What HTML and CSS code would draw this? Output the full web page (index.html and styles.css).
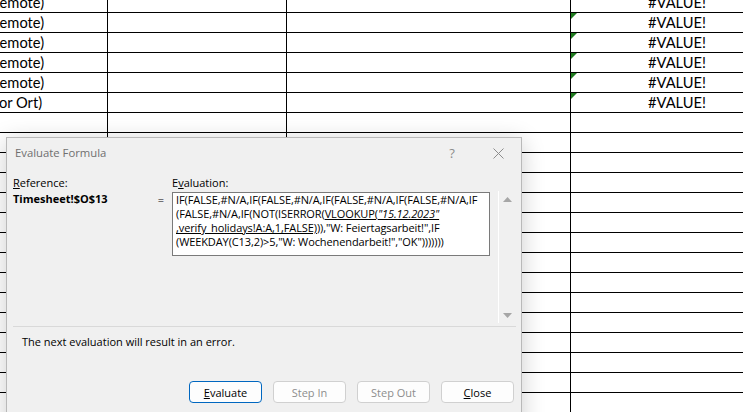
FILE: index.html
```html
<!DOCTYPE html>
<html lang="en">
<head>
<meta charset="utf-8">
<title>Evaluate Formula</title>
<link rel="stylesheet" href="styles.css">
</head>
<body>
<div class="sheet">
  <div class="row"><div class="c a"><span class="ov ov-r">(Remote)</span></div><div class="c b"></div><div class="c m"></div><div class="c d">#VALUE!</div></div>
  <div class="row"><div class="c a"><span class="ov ov-r">(Remote)</span></div><div class="c b"></div><div class="c m"></div><div class="c d flag">#VALUE!</div></div>
  <div class="row"><div class="c a"><span class="ov ov-r">(Remote)</span></div><div class="c b"></div><div class="c m"></div><div class="c d flag">#VALUE!</div></div>
  <div class="row"><div class="c a"><span class="ov ov-r">(Remote)</span></div><div class="c b"></div><div class="c m"></div><div class="c d flag">#VALUE!</div></div>
  <div class="row"><div class="c a"><span class="ov ov-r">(Remote)</span></div><div class="c b"></div><div class="c m"></div><div class="c d flag">#VALUE!</div></div>
  <div class="row"><div class="c a"><span class="ov ov-v">(vor Ort)</span></div><div class="c b"></div><div class="c m"></div><div class="c d flag">#VALUE!</div></div>
  <div class="row"><div class="c a"></div><div class="c b"></div><div class="c m"></div><div class="c d"></div></div>
  <div class="row"><div class="c a"></div><div class="c b"></div><div class="c m"></div><div class="c d"></div></div>
  <div class="row"><div class="c a"></div><div class="c b"></div><div class="c m"></div><div class="c d"></div></div>
  <div class="row"><div class="c a"></div><div class="c b"></div><div class="c m"></div><div class="c d"></div></div>
  <div class="row"><div class="c a"></div><div class="c b"></div><div class="c m"></div><div class="c d"></div></div>
  <div class="row"><div class="c a"></div><div class="c b"></div><div class="c m"></div><div class="c d"></div></div>
  <div class="row"><div class="c a"></div><div class="c b"></div><div class="c m"></div><div class="c d"></div></div>
  <div class="row"><div class="c a"></div><div class="c b"></div><div class="c m"></div><div class="c d"></div></div>
  <div class="row"><div class="c a"></div><div class="c b"></div><div class="c m"></div><div class="c d"></div></div>
  <div class="row"><div class="c a"></div><div class="c b"></div><div class="c m"></div><div class="c d"></div></div>
  <div class="row"><div class="c a"></div><div class="c b"></div><div class="c m"></div><div class="c d"></div></div>
  <div class="row"><div class="c a"></div><div class="c b"></div><div class="c m"></div><div class="c d"></div></div>
  <div class="row"><div class="c a"></div><div class="c b"></div><div class="c m"></div><div class="c d"></div></div>
  <div class="row"><div class="c a"></div><div class="c b"></div><div class="c m"></div><div class="c d"></div></div>
  <div class="row"><div class="c a"></div><div class="c b"></div><div class="c m"></div><div class="c d"></div></div>
  <div class="row"><div class="c a"></div><div class="c b"></div><div class="c m"></div><div class="c d"></div></div>
</div>

<div class="dialog">
  <div class="titlebar">
    <span class="title">Evaluate Formula</span>
    <div class="tb-btns">
      <span class="tb-btn help">?</span>
      <span class="tb-btn">
        <svg width="11" height="11" viewBox="0 0 11 11"><path d="M0.5 0.5 L10.5 10.5 M10.5 0.5 L0.5 10.5" stroke="#8c8c8c" stroke-width="1" fill="none"/></svg>
      </span>
    </div>
  </div>
  <div class="body">
    <div class="lbl lbl-ref"><u>R</u>eference:</div>
    <div class="lbl lbl-eval">E<u>v</u>aluation:</div>
    <div class="ref">Timesheet!$O$13</div>
    <div class="eq">=</div>
    <div class="evalbox">
      <div class="ln">IF(FALSE,#N/A,IF(FALSE,#N/A,IF(FALSE,#N/A,IF(FALSE,#N/A,IF</div>
      <div class="ln">(FALSE,#N/A,IF(NOT(ISERROR(<u>VLOOKUP(<i>"15.12.2023"</i></u></div>
      <div class="ln"><u>,verify_holidays!A:A,1,FALSE)</u>)),"W: Feiertagsarbeit!",IF</div>
      <div class="ln">(WEEKDAY(C13,2)&gt;5,"W: Wochenendarbeit!","OK")))))))</div>
    </div>
    <div class="scroll">
      <svg class="arr" width="9" height="5" viewBox="0 0 9 5"><path d="M4.5 0 L9 5 L0 5 Z" fill="#a6a6a6"/></svg>
      <svg class="arr" width="9" height="5" viewBox="0 0 9 5"><path d="M0 0 L9 0 L4.5 5 Z" fill="#a6a6a6"/></svg>
    </div>
  </div>
  <div class="sep"></div>
  <div class="msg">The next evaluation will result in an error.</div>
  <div class="buttons">
    <span class="btn default"><u>E</u>valuate</span>
    <span class="btn disabled">Step In</span>
    <span class="btn disabled">Step Out</span>
    <span class="btn"><u>C</u>lose</span>
  </div>
</div>
</body>
</html>
```

FILE: styles.css
```css
html, body {
  margin: 0;
  padding: 0;
  height: 100%;
  overflow: hidden;
  background: #ffffff;
}

.sheet {
  margin-top: -7px;
  width: 784px;
  font-family: Lato, "Liberation Sans", sans-serif;
  font-size: 14.67px;
  color: #000;
}

.row {
  display: grid;
  grid-template-columns: 108px 179px 284px 213px;
  height: 20px;
}

.c {
  box-sizing: border-box;
  height: 20px;
  border-right: 1px solid #000;
  border-bottom: 1px solid #000;
  padding-top: 1px;
  line-height: 18px;
  white-space: nowrap;
  overflow: hidden;
  position: relative;
}

.ov { display: inline-block; }
.ov-r { margin-left: -13px; }
.ov-v { margin-left: -12px; }

.d { text-align: center; }

.flag::before {
  content: "";
  position: absolute;
  left: 0;
  top: 0;
  border-top: 6px solid #1e7a1e;
  border-right: 6px solid transparent;
}

/* dialog */
.dialog {
  position: absolute;
  left: 6px;
  top: 137px;
  width: 516px;
  height: 300px;
  box-sizing: border-box;
  background: #f0f0f0;
  border: 1px solid #b9b9b9;
  box-shadow: 0 4px 22px rgba(0, 0, 0, 0.2);
  font-family: "Open Sans", "Noto Sans", sans-serif;
  font-size: 11px;
  color: #000;
}

.titlebar {
  display: flex;
  align-items: center;
  height: 30px;
}

.title {
  flex: 1;
  padding-left: 8px;
  padding-bottom: 1px;
  color: #6f6f6f;
  font-size: 11.3px;
}

.tb-btns { display: flex; }

.tb-btn {
  width: 46px;
  height: 30px;
  display: flex;
  align-items: center;
  justify-content: center;
  color: #8c8c8c;
}

.help { font-size: 13px; }

.body {
  display: grid;
  grid-template-columns: 137px 22px 318px 8px 17px;
  grid-template-rows: 17px 132px;
  padding: 6px 5px 0 6px;
}

.lbl {
  line-height: 17px;
  grid-row: 1;
}
.lbl-ref { grid-column: 1; }
.lbl-eval { grid-column: 3; }

.ref {
  grid-row: 2;
  grid-column: 1;
  font-weight: bold;
  padding-top: 1px;
  line-height: 14px;
}

.eq {
  grid-row: 2;
  grid-column: 2;
  text-align: center;
  padding-top: 2px;
  line-height: 14px;
}

.evalbox {
  grid-row: 2;
  grid-column: 3;
  align-self: start;
  margin-top: 1px;
  height: 64px;
  box-sizing: border-box;
  background: #fff;
  border: 1px solid #7a7a7a;
  padding: 0 0 0 3px;
  line-height: 14px;
  letter-spacing: -0.1px;
  white-space: nowrap;
  overflow: hidden;
}

.scroll {
  grid-row: 2;
  grid-column: 5;
  border-left: 1px solid #ffffff;
  display: flex;
  flex-direction: column;
  justify-content: space-between;
  align-items: center;
  padding: 6px 0 5px;
}

.sep {
  height: 1px;
  background: #d9d9d9;
  margin: 3px 5px 0 6px;
}

.msg {
  padding-left: 15px;
  margin-top: 7px;
  line-height: 16px;
}

.buttons {
  display: flex;
  justify-content: flex-end;
  gap: 11px;
  padding-right: 7px;
  margin-top: 31px;
}

.btn {
  width: 73px;
  height: 22px;
  box-sizing: border-box;
  border: 1px solid #d0d0d0;
  border-radius: 4px;
  background: #fdfdfd;
  display: flex;
  align-items: center;
  justify-content: center;
}

.btn.default { border-color: #0067c0; }
.btn.disabled { color: #8d8d8d; }
```
